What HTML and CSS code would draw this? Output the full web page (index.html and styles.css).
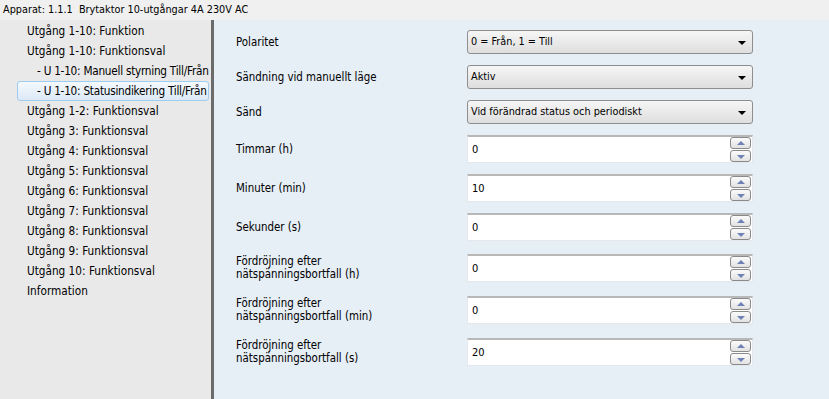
FILE: index.html
```html
<!DOCTYPE html>
<html lang="sv">

<head>
    <meta charset="UTF-8">
    <title>Apparat 1.1.1</title>
    <link rel="stylesheet" href="styles.css">
</head>

<body>
    <!-- HEADER -->
    <header class="Header">Apparat: 1.1.1&nbsp; Brytaktor 10-utgångar 4A 230V AC</header>

    <main class="Main">
        <!-- Meny -->
        <nav class="Nav">
            <div class="Nav-item">Utgång 1-10: Funktion</div>
            <div class="Nav-item">Utgång 1-10: Funktionsval</div>
            <div class="Nav-item Nav-item--sub">- U 1-10: Manuell styrning Till/Från</div>
            <div class="Nav-item Nav-item--sub is-selected">- U 1-10: Statusindikering Till/Från</div>
            <div class="Nav-item">Utgång 1-2: Funktionsval</div>
            <div class="Nav-item">Utgång 3: Funktionsval</div>
            <div class="Nav-item">Utgång 4: Funktionsval</div>
            <div class="Nav-item">Utgång 5: Funktionsval</div>
            <div class="Nav-item">Utgång 6: Funktionsval</div>
            <div class="Nav-item">Utgång 7: Funktionsval</div>
            <div class="Nav-item">Utgång 8: Funktionsval</div>
            <div class="Nav-item">Utgång 9: Funktionsval</div>
            <div class="Nav-item">Utgång 10: Funktionsval</div>
            <div class="Nav-item">Information</div>
        </nav>

        <!-- Parametrar -->
        <section class="Params">
            <div class="Row">
                <div class="Row-label">Polaritet</div>
                <div class="Select">0 = Från, 1 = Till<span class="Select-arrow"></span></div>
            </div>
            <div class="Row">
                <div class="Row-label">Sändning vid manuellt läge</div>
                <div class="Select">Aktiv<span class="Select-arrow"></span></div>
            </div>
            <div class="Row">
                <div class="Row-label">Sänd</div>
                <div class="Select">Vid förändrad status och periodiskt<span class="Select-arrow"></span></div>
            </div>
            <div class="Row">
                <div class="Row-label">Timmar (h)</div>
                <div class="Spin">0<span class="Spin-buttons"><span class="Spin-up"></span><span class="Spin-down"></span></span></div>
            </div>
            <div class="Row">
                <div class="Row-label">Minuter (min)</div>
                <div class="Spin">10<span class="Spin-buttons"><span class="Spin-up"></span><span class="Spin-down"></span></span></div>
            </div>
            <div class="Row">
                <div class="Row-label">Sekunder (s)</div>
                <div class="Spin">0<span class="Spin-buttons"><span class="Spin-up"></span><span class="Spin-down"></span></span></div>
            </div>
            <div class="Row Row--double">
                <div class="Row-label">Fördröjning efter<br>nätspänningsbortfall (h)</div>
                <div class="Spin">0<span class="Spin-buttons"><span class="Spin-up"></span><span class="Spin-down"></span></span></div>
            </div>
            <div class="Row Row--double">
                <div class="Row-label">Fördröjning efter<br>nätspänningsbortfall (min)</div>
                <div class="Spin">0<span class="Spin-buttons"><span class="Spin-up"></span><span class="Spin-down"></span></span></div>
            </div>
            <div class="Row Row--double">
                <div class="Row-label">Fördröjning efter<br>nätspänningsbortfall (s)</div>
                <div class="Spin">20<span class="Spin-buttons"><span class="Spin-up"></span><span class="Spin-down"></span></span></div>
            </div>
        </section>
    </main>
</body>

</html>
```

FILE: styles.css
```css
/* VARIABLES */
:root {
    --color-header: #f0f0f0;
    --color-nav: #e9e9e9;
    --color-params: #e6eef6;
    --color-divider: #6b6b6b;
    --color-text: #000;
    --font-ui: "DejaVu Sans Condensed", "DejaVu Sans", sans-serif;
}

/* RESET */
* {
    margin: 0;
    padding: 0;
    box-sizing: border-box;
}

body {
    width: 829px;
    height: 399px;
    overflow: hidden;
    display: flex;
    flex-direction: column;
    font-family: var(--font-ui);
    font-size: 11.7px;
    color: var(--color-text);
    background-color: var(--color-params);
}

/* HEADER */
.Header {
    height: 20px;
    line-height: 19px;
    padding-left: 3px;
    font-size: 10.8px;
    background-color: var(--color-header);
}

.Main {
    flex: 1;
    display: flex;
}

/* MENY */
.Nav {
    width: 214px;
    padding-top: 1px;
    background-color: var(--color-nav);
    border-right: 3px solid var(--color-divider);
}

.Nav-item {
    height: 20px;
    line-height: 21px;
    padding-left: 27px;
    white-space: nowrap;
}

.Nav-item--sub {
    padding-left: 37px;
    letter-spacing: -0.25px;
}

.Nav-item.is-selected {
    margin-left: 17px;
    width: 192px;
    padding-left: 19px;
    line-height: 19px;
    border: 1px solid #9fcdf2;
    border-radius: 3px;
    background: linear-gradient(#f4f9fd, #dce9f6);
}

/* PARAMETRAR */
.Params {
    flex: 1;
    padding: 10px 0 0 22px;
    display: flex;
    flex-direction: column;
    gap: 11px;
}

.Row {
    display: flex;
    align-items: center;
}

.Row--double {
    height: 30px;
    margin-top: 1px;
}

.Row-label {
    width: 231px;
    font-size: 11.4px;
    line-height: 13px;
}

.Select {
    position: relative;
    width: 286px;
    height: 24px;
    line-height: 22px;
    padding-left: 3px;
    font-size: 10.8px;
    border: 1px solid #8e8e8e;
    border-radius: 3px;
    background: linear-gradient(#f6f6f6, #dedede);
}

.Select-arrow {
    position: absolute;
    right: 6px;
    top: 10px;
    border-left: 4px solid transparent;
    border-right: 4px solid transparent;
    border-top: 4px solid #000;
}

.Spin {
    position: relative;
    width: 286px;
    height: 28px;
    line-height: 26px;
    padding-left: 4px;
    font-size: 11px;
    background-color: #fff;
    border: 1px solid #e4e8ec;
    border-top: 2px solid #b8b8b8;
}

.Spin-buttons {
    position: absolute;
    right: 1px;
    top: 0;
    display: flex;
    flex-direction: column;
    gap: 1px;
}

.Spin-up,
.Spin-down {
    position: relative;
    width: 21px;
    height: 12px;
    border: 1px solid #8a8a8a;
    border-radius: 3px;
    background: linear-gradient(#fbfbfb, #e2e2e2);
}

.Spin-up::after,
.Spin-down::after {
    content: "";
    position: absolute;
    left: 6px;
    border-left: 4px solid transparent;
    border-right: 4px solid transparent;
}

.Spin-up::after {
    top: 3px;
    border-bottom: 4px solid #6f82b5;
}

.Spin-down::after {
    top: 4px;
    border-top: 4px solid #6f82b5;
}
```
